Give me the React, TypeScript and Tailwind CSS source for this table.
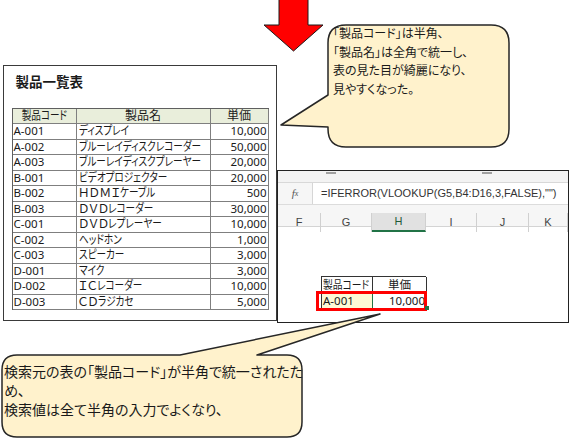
import React from "react";

const rows: [string, string, string][] = [
  ["A-001", "ディスプレイ", "10,000"],
  ["A-002", "ブルーレイディスクレコーダー", "50,000"],
  ["A-003", "ブルーレイディスクプレーヤー", "20,000"],
  ["B-001", "ビデオプロジェクター", "20,000"],
  ["B-002", "ＨＤＭＩケーブル", "500"],
  ["B-003", "ＤＶＤレコーダー", "30,000"],
  ["C-001", "ＤＶＤレプレーヤー", "10,000"],
  ["C-002", "ヘッドホン", "1,000"],
  ["C-003", "スピーカー", "3,000"],
  ["D-001", "マイク", "3,000"],
  ["D-002", "ＩＣレコーダー", "10,000"],
  ["D-003", "ＣＤラジカセ", "5,000"],
];

const cell = "h-[15.5px] border-r border-b border-[#7f7f7f] leading-[14.5px] whitespace-nowrap";

function Name({ n }: { n: string }) {
  const m = n.match(/^([Ａ-Ｚ]*)(.*)$/) as RegExpMatchArray;
  return (
    <>
      {m[1]}
      <span className="inline-block origin-left scale-x-[0.8]">{m[2]}</span>
    </>
  );
}

function ProductPanel() {
  return (
    <div className="absolute left-[3px] top-[65px] w-[274px] h-[256px] border-[1.5px] border-[#3a3a3a] bg-white flex flex-col [font-family:'Noto_Sans','Noto_Sans_CJK_JP',sans-serif] text-[#1a1a1a]">
      <div className="pl-[11.5px] pt-[6px] h-[24px] text-[13.5px] font-bold leading-[18px] [font-family:'Noto_Sans_CJK_JP',sans-serif]">
        製品一覧表
      </div>
      <div className="ml-[7.5px] mt-[17.5px] w-[257px] grid grid-cols-[64px_134px_58px] border-l border-t border-[#5f5f5f] text-[12px] [font-feature-settings:'palt']">
        <div className={`${cell} h-[14px] leading-[13px] bg-[#e9eedb] text-center`}>
          <span className="inline-block scale-x-[0.8]">製品コード</span>
        </div>
        <div className={`${cell} h-[14px] leading-[13px] bg-[#e9eedb] text-center`}>製品名</div>
        <div className={`${cell} h-[14px] leading-[13px] bg-[#e9eedb] text-center`}>単価</div>
        {rows.map(([c, n, p]) => (
          <React.Fragment key={c}>
            <div className={`${cell} pl-[1px] text-[11.5px]`}>{c}</div>
            <div className={`${cell} pl-[2px]`}>
              <Name n={n} />
            </div>
            <div className={`${cell} pr-[1px] text-right text-[11.5px]`}>{p}</div>
          </React.Fragment>
        ))}
      </div>
    </div>
  );
}

function ExcelPanel() {
  const cols = ["F", "G", "H", "I", "J", "K"];
  return (
    <div className="absolute left-[277px] top-[170px] w-[292px] h-[153px] border-[1.5px] border-[#222] bg-white flex flex-col overflow-hidden [font-family:'Liberation_Sans','Noto_Sans_CJK_JP',sans-serif]">
      <div className="h-[12px] shrink-0 bg-[#f3f3f3] border-b border-[#d8d8d8] flex items-start">
        <div className="ml-[48px] mt-[1px] h-[2px] w-[10px] bg-[#a0a0a0]" />
        <div className="ml-[146px] mt-[1px] h-[2px] w-[10px] bg-[#a0a0a0]" />
      </div>
      <div className="h-[22px] shrink-0 flex bg-[#f6f6f6] border-b border-[#dcdcdc]">
        <div className="w-[35px] flex items-center justify-center border-r border-[#d6d6d6] text-[11px] italic text-[#555] [font-family:'Liberation_Serif',serif]">
          f<span className="text-[8px]">x</span>
        </div>
        <div className="flex-1 bg-white flex items-center pl-[8px] text-[11px] text-[#333] whitespace-nowrap">
          =IFERROR(VLOOKUP(G5,B4:D16,3,FALSE),"")
        </div>
      </div>
      <div className="h-[8px] shrink-0 bg-[#f6f6f6]" />
      <div className="h-[14px] shrink-0 grid grid-cols-[43px_51px_54px_51px_52px_1fr] bg-[#f6f6f6] border-b border-[#d4d4d4] text-[11px] text-[#444]">
        {cols.map((c) => (
          <div
            key={c}
            className={
              c === "H"
                ? "flex items-center justify-center border-r border-[#d0d0d0] bg-[#e1e1e1] border-b-2 border-b-[#217346] text-[#1e5a37]"
                : "flex items-center justify-center border-r border-[#d0d0d0]"
            }
          >
            {c}
          </div>
        ))}
      </div>
      <div className="flex-1 grid grid-cols-[43px_51px_54px_51px_52px_1fr] content-start">
        <div className="col-start-2 col-span-2 mt-[49px] relative [font-family:'Noto_Sans','Noto_Sans_CJK_JP',sans-serif] text-[11.5px] text-[#1a1a1a] [font-feature-settings:'palt']">
          <div className="grid grid-cols-[51px_54px] border-l border-t border-[#333]">
            <div className="h-[16px] border-r border-b border-[#333] leading-[15px] pl-[1px] whitespace-nowrap">
              <span className="inline-block origin-left scale-x-[0.85]">製品コード</span>
            </div>
            <div className="h-[16px] border-r border-b border-[#333] leading-[15px] text-center">単価</div>
            <div className="h-[16px] border-r border-b border-[#333] border-r-[#217346] leading-[15px] pl-[1px] bg-[#fdf9d6]">A-001</div>
            <div className="h-[16px] border-r border-b border-[#333] leading-[15px] pr-[1px] text-right">10,000</div>
          </div>
          <div className="absolute left-[-5px] top-[15px] w-[111px] h-[20px] border-[3px] border-[#ff0000]" />
          <div className="absolute left-[104px] top-[30px] w-[4px] h-[4px] bg-[#217346]" />
        </div>
      </div>
    </div>
  );
}

export default function App() {
  return (
    <div className="relative w-[571px] h-[438px] bg-white overflow-hidden">
      <svg className="absolute inset-0 pointer-events-none" width="571" height="438">
        <polygon
          points="279,-1 308,-1 308,25 323,25 293.5,51 264,25 279,25"
          fill="#ff0000"
          stroke="#1a1a1a"
          strokeWidth="1"
        />
      </svg>
      <ProductPanel />
      <ExcelPanel />
      <svg className="absolute inset-0 pointer-events-none" width="571" height="438">
        <path
          d="M 346 25 H 491 Q 509 25 509 43 V 129 Q 509 147 491 147 H 346 Q 328 147 328 129 V 127 L 281 125 L 328 95 V 43 Q 328 25 346 25 Z"
          fill="#fff2cc"
          stroke="#262626"
          strokeWidth="1.5"
          strokeLinejoin="round"
        />
        <path
          d="M 17 355 H 180 L 380 314 L 257 355 H 287 Q 302 355 302 370 V 422 Q 302 437 287 437 H 17 Q 2 437 2 422 V 370 Q 2 355 17 355 Z"
          fill="#fff2cc"
          stroke="#262626"
          strokeWidth="1.5"
          strokeLinejoin="round"
        />
      </svg>
      <div className="absolute left-[333px] top-[24px] text-[12px] leading-[18.5px] text-[#1a1a1a] whitespace-nowrap [font-family:'Noto_Sans_CJK_JP',sans-serif] [font-feature-settings:'palt']">
        <div>「製品コード」は半角、</div>
        <div>「製品名」は全角で統一し、</div>
        <div>表の見た目が綺麗になり、</div>
        <div>見やすくなった。</div>
      </div>
      <div className="absolute left-[4px] top-[362px] text-[14px] leading-[19px] text-[#1a1a1a] whitespace-nowrap [font-family:'Noto_Sans_CJK_JP',sans-serif] [font-feature-settings:'palt']">
        <div>検索元の表の「製品コード」が半角で統一されたた</div>
        <div>め、</div>
        <div>検索値は全て半角の入力でよくなり、</div>
      </div>
    </div>
  );
}
